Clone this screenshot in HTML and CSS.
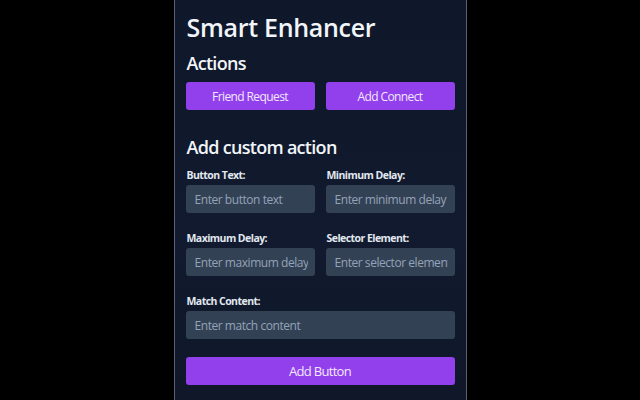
FILE: index.html
```html
<!DOCTYPE html>
<html>
<head>
<meta charset="utf-8">
<link rel="stylesheet" href="styles.css">
</head>
<body>
<div class="popup">
  <h1 class="title">Smart Enhancer</h1>
  <h2 class="section">Actions</h2>
  <div class="actions">
    <button class="btn">Friend Request</button>
    <button class="btn">Add Connect</button>
  </div>
  <h2 class="section custom">Add custom action</h2>
  <div class="form">
    <div class="field">
      <label class="label">Button Text:</label>
      <input class="input" placeholder="Enter button text">
    </div>
    <div class="field">
      <label class="label">Minimum Delay:</label>
      <input class="input" placeholder="Enter minimum delay">
    </div>
    <div class="field">
      <label class="label">Maximum Delay:</label>
      <input class="input" placeholder="Enter maximum delay">
    </div>
    <div class="field">
      <label class="label">Selector Element:</label>
      <input class="input" placeholder="Enter selector element">
    </div>
    <div class="field wide">
      <label class="label">Match Content:</label>
      <input class="input" placeholder="Enter match content">
    </div>
  </div>
  <button class="btn submit">Add Button</button>
</div>
</body>
</html>
```
FILE: styles.css
```css
html, body {
  margin: 0;
  padding: 0;
  height: 100%;
  background: #000;
}
body {
  display: flex;
  justify-content: center;
  font-family: "Open Sans", "Noto Sans", sans-serif;
}
.popup {
  width: 269px;
  height: 400px;
  box-sizing: content-box;
  padding: 0 11px 0 11px;
  border-left: 1px solid #5b6170;
  border-right: 1px solid #5b6170;
  background: linear-gradient(180deg, #0f172a 0%, #111a2e 60%, #0f1729 100%);
  color: #f1f5f9;
  overflow: hidden;
}
.title {
  margin: 9px 0 0 1px;
  font-size: 25px;
  font-weight: 600;
  line-height: 36px;
  letter-spacing: -0.3px;
}
.section {
  margin: 6px 0 0 1px;
  font-size: 18px;
  font-weight: 600;
  line-height: 24px;
  letter-spacing: -0.7px;
}
.actions {
  display: grid;
  grid-template-columns: 1fr 1fr;
  gap: 11px;
  margin-top: 7px;
}
.btn {
  height: 28px;
  border: none;
  border-radius: 3px;
  background: #9140ec;
  color: #f3e8ff;
  font-family: inherit;
  font-size: 12px;
  letter-spacing: -0.6px;
  padding: 0;
}
.custom {
  margin-top: 25px;
}
.form {
  display: grid;
  grid-template-columns: 1fr 1fr;
  column-gap: 11px;
  row-gap: 19px;
  margin-top: 10px;
}
.field {
  display: flex;
  flex-direction: column;
  min-width: 0;
}
.wide {
  grid-column: 1 / 3;
}
.label {
  font-size: 10.5px;
  font-weight: 700;
  color: #e2e8f0;
  line-height: 13px;
  margin: 0 0 3px 1px;
  letter-spacing: -0.55px;
}
.input {
  height: 28px;
  box-sizing: border-box;
  border: none;
  border-radius: 3px;
  background: #334155;
  color: #e2e8f0;
  font-family: inherit;
  font-size: 12px;
  letter-spacing: -0.45px;
  padding: 0 7px 0 9px;
  min-width: 0;
  width: 100%;
  outline: none;
}
.input::placeholder {
  color: #94a3b8;
}
.submit {
  width: 100%;
  margin-top: 18px;
  font-size: 13px;
  letter-spacing: -0.7px;
}
```
